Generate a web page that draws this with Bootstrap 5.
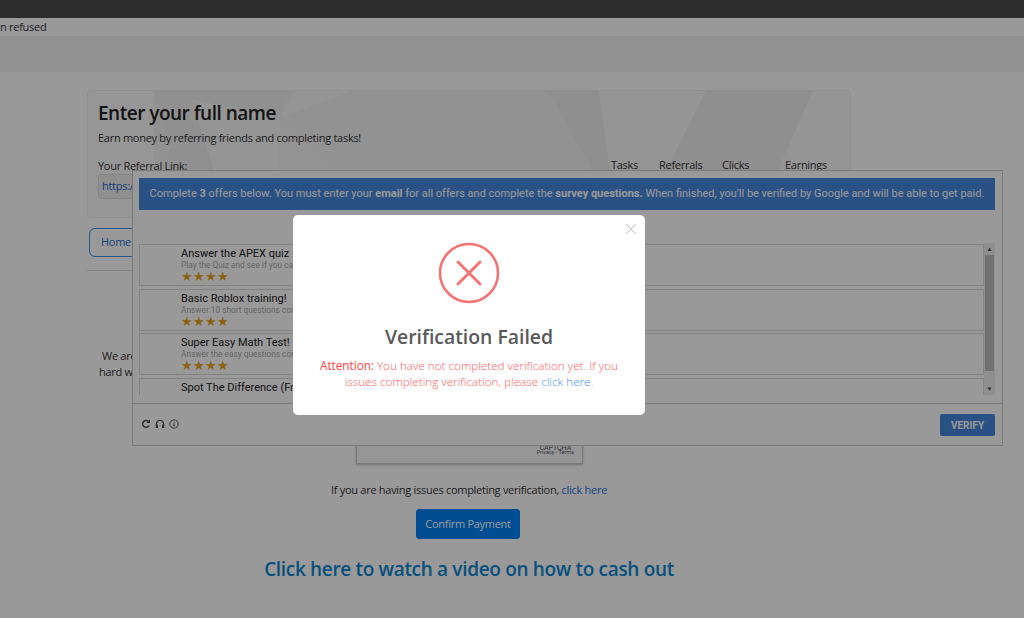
<!DOCTYPE html>
<html lang="en">
<head>
<meta charset="utf-8">
<title>Verification Failed</title>
<link rel="stylesheet" href="https://cdn.jsdelivr.net/npm/bootstrap@5.3.0/dist/css/bootstrap.min.css">
<style>
html,body{height:618px;overflow:hidden}
body{background:#fff;font-family:"Open Sans","Noto Sans",sans-serif;font-size:11px;letter-spacing:-.28px;color:#333;position:relative}
.topstrip{height:18px;background:#4b4b4b}
.errline{height:18px;line-height:18px;background:#fff;white-space:nowrap;color:#333}
.barband{height:36px;background:#f4f4f4;border-top:1px solid #f0f0f0}
.pagewrap{width:764px;margin-left:87px;padding-top:18px}
.herobox{height:128px;border:1px solid #eee;border-radius:4px;position:relative;overflow:hidden;padding:10px 10px;background:#fbfbfb}
.herobox svg{position:absolute;left:0;top:0}
.herotext{position:relative}
.herotitle{font-size:19px;font-weight:600;letter-spacing:-.5px;color:#222;margin:0 0 5px;line-height:24px}
.herosub{margin:0 0 12px;line-height:16px}
.reflabel{line-height:16px}
.refinput{width:200px;height:25px;border:1px solid #ddd;background:#eee;border-radius:3px;padding:3px;color:#1f6fd0}
.statcols{position:absolute;top:66px;left:523px;display:flex;line-height:16px}
.statcols span:nth-child(1){width:48px}
.statcols span:nth-child(2){width:63px}
.statcols span:nth-child(3){width:63px}
.homebtn{margin:10px 0 0 2px;width:80px;height:29px;border:1px solid #3a8ee6;border-radius:6px;padding:5px 11px;color:#1f6fd0}
.pagerule{margin:13px 0 0;border-top:1px solid #ddd;opacity:1}
.intro{margin:77px 0 0 12px;line-height:16px;height:32px;text-indent:3px}
.capbox{width:227px;height:80px;margin:4px 0 0 269px;border:1px solid #ccc;box-shadow:0 1px 2px rgba(0,0,0,.25);text-align:right;padding:61px 8px 0 0;font-family:Roboto,sans-serif;letter-spacing:0;font-size:7px;line-height:4px;color:#555;background:#fafafa}
.capmark{display:inline-block;text-align:center}
.capterms{display:block;font-size:5.5px}
.issueline{margin:18px 0 0;text-align:center;line-height:16px;color:#333}
.issueline a{color:#1f6fd0;text-decoration:none}
.paybtn{display:block;margin:11px 0 0 329px;width:104px;height:30px;background:#0080f5;border:1px solid #0080f5;color:#fff;font-size:11px;letter-spacing:-.28px;padding:0;border-radius:3px}
.cashlink{display:block;margin-top:16px;text-align:center;font-size:19px;font-weight:600;letter-spacing:-.33px;line-height:28px;color:#0c86d2;text-decoration:none}
.dimlayer{position:absolute;inset:0;background:rgba(0,0,0,.4);z-index:5}
.capwin{position:absolute;left:132px;top:170px;width:871px;height:276px;border:1px solid #ccc;background:#fff;z-index:3;font-family:Roboto,sans-serif;letter-spacing:0}
.offerbanner{margin:7px 7px 0 6px;height:32px;background:#4788dc;color:#fff;font-size:11px;line-height:31px;text-align:center;white-space:nowrap}
.offerlist{margin:33px 7px 0 6px;height:152px;display:flex}
.offerrows{flex:1;overflow:hidden;display:flex;flex-direction:column;gap:2.5px;padding-top:1px}
.offerrow{flex:none;height:42px;border:1px solid #ddd;padding:2px 0 0 41px;font-size:11px;line-height:13px;color:#222;white-space:nowrap}
.offerrow small{display:block;font-size:8.3px;line-height:10px;color:#aaa}
.offerrow b{display:block;font-weight:400;color:#e8a317;font-size:13px;line-height:13px;letter-spacing:-.1px}
.scrolltrack{width:11px;background:#eee;position:relative;display:flex;flex-direction:column;align-items:center;justify-content:space-between;font-size:6px;line-height:12px;color:#444}
.scrollthumb{flex:1;width:9px;background:#bdbdbd;margin-bottom:12px}
.capfoot{margin-top:8px;border-top:1px solid #ccc;display:flex;justify-content:space-between;align-items:center;padding:10px 7px 0 8px}
.footicons{display:flex;gap:4px;color:#555;margin-bottom:2px}
.verifybtn{width:55px;height:22px;background:#4788dc;color:#fff;border:0;border-radius:2px;font-size:10px;font-weight:700;padding:0}
.failmodal{position:absolute;left:293px;top:215px;width:352px;height:200px;background:#fff;border-radius:5px;z-index:10;text-align:center;letter-spacing:0}
.failclose{position:absolute;right:9px;top:9px;line-height:0}
.failicon{margin-top:27px;display:block;margin-left:auto;margin-right:auto}
.failtitle{font-size:19.4px;font-weight:600;color:#595959;margin:19px 0 0;line-height:28px}
.failtext{margin:6px 0 0;font-size:11.7px;line-height:16px;color:#ff5a5a;font-weight:300;white-space:nowrap}
.failtext strong{color:#ff4040;font-weight:400}
.failtext a{color:#3f90f5;text-decoration:none}
</style>
</head>
<body>
<div class="topstrip"></div>
<div class="errline">n refused</div>
<div class="barband"></div>
<div class="pagewrap">
  <div class="herobox">
    <svg width="764" height="128" viewBox="0 0 764 128"><rect x="66" width="698" height="128" fill="#f4f4f4"/><polygon points="66,0 200,0 192,28 170,90 90,90" fill="#f0f0f0"/><polygon points="103,8 192,28 191,80 126,80" fill="#f8f8f8"/><polygon points="192,27 263,0 208,0" fill="#f9f9f9"/><polygon points="192,27 250,80 191,80" fill="#f6f6f6"/><polygon points="460,0 511,0 523,80 505,80" fill="#eeeeee"/><polygon points="511,0 618,0 578,80 522,80" fill="#f9f9f9"/><polygon points="618,0 725,0 688,80 578,80" fill="#eeeeee"/><polygon points="725,0 764,0 764,128 670,128" fill="#f9f9f9"/></svg>
    <div class="herotext">
      <h1 class="herotitle">Enter your full name</h1>
      <p class="herosub">Earn money by referring friends and completing tasks!</p>
      <div class="reflabel">Your Referral Link:</div>
      <div class="refinput">https://</div>
    </div>
    <div class="statcols"><span>Tasks</span><span>Referrals</span><span>Clicks</span><span>Earnings</span></div>
  </div>
  <div class="homebtn">Home</div>
  <hr class="pagerule">
  <p class="intro">We are<br>hard working</p>
  <div class="capbox"><span class="capmark">CAPTCHA<span class="capterms">Privacy - Terms</span></span></div>
  <p class="issueline">If you are having issues completing verification, <a href="#">click here</a></p>
  <button class="btn paybtn" type="button">Confirm Payment</button>
  <a class="cashlink" href="#">Click here to watch a video on how to cash out</a>
</div>

<div class="capwin">
  <div class="offerbanner">Complete <b>3</b> offers below. You must enter your <b>email</b> for all offers and complete the <b>survey questions.</b> When finished, you'll be verified by Google and will be able to get paid.</div>
  <div class="offerlist">
    <div class="offerrows">
      <div class="offerrow">Answer the APEX quiz<small>Play the Quiz and see if you can</small><b>★★★★</b></div>
      <div class="offerrow">Basic Roblox training!<small>Answer 10 short questions correctly</small><b>★★★★</b></div>
      <div class="offerrow">Super Easy Math Test!<small>Answer the easy questions correctly</small><b>★★★★</b></div>
      <div class="offerrow">Spot The Difference (Free)</div>
    </div>
    <div class="scrolltrack"><span>▲</span><div class="scrollthumb"></div><span>▼</span></div>
  </div>
  <div class="capfoot">
    <div class="footicons">
      <svg width="10" height="10" viewBox="0 0 10 10" fill="none" stroke="currentColor" stroke-width="1.6"><path d="M8 6.6A3.4 3.4 0 1 1 7.6 2.6"/><path d="M9 .6v3.4h-3.4z" fill="currentColor" stroke="none"/></svg>
      <svg width="10" height="10" viewBox="0 0 10 10" fill="none" stroke="currentColor" stroke-width="1.3"><path d="M1.4 7V5a3.6 3.6 0 0 1 7.2 0v2"/><rect x=".8" y="5.4" width="2.2" height="3.6" rx=".6" fill="currentColor" stroke="none"/><rect x="7" y="5.4" width="2.2" height="3.6" rx=".6" fill="currentColor" stroke="none"/></svg>
      <svg width="10" height="10" viewBox="0 0 10 10" fill="none" stroke="currentColor" stroke-width=".9"><circle cx="5" cy="5" r="4.2"/><path d="M5 4.2v3.2M5 2.4v1.1" stroke-width="1.1"/></svg>
    </div>
    <button class="verifybtn" type="button">VERIFY</button>
  </div>
</div>

<div class="dimlayer"></div>

<div class="failmodal">
  <div class="failclose"><svg width="10" height="10" viewBox="0 0 10 10" stroke="#ccc" stroke-width="1.1"><path d="M0 0l10 10M10 0l-10 10"/></svg></div>
  <svg class="failicon" width="62" height="62" viewBox="0 0 62 62" fill="none" stroke="#f27474"><circle cx="31" cy="31" r="29" stroke-width="2.6"/><path d="M20 20l22 22M42 20l-22 22" stroke-width="3" stroke-linecap="round"/></svg>
  <h2 class="failtitle">Verification Failed</h2>
  <p class="failtext"><strong>Attention:</strong> You have not completed verification yet. If you<br>issues completing verification, please <a href="#">click here.</a></p>
</div>
<script src="https://cdn.jsdelivr.net/npm/bootstrap@5.3.0/dist/js/bootstrap.bundle.min.js"></script>
</body>
</html>
